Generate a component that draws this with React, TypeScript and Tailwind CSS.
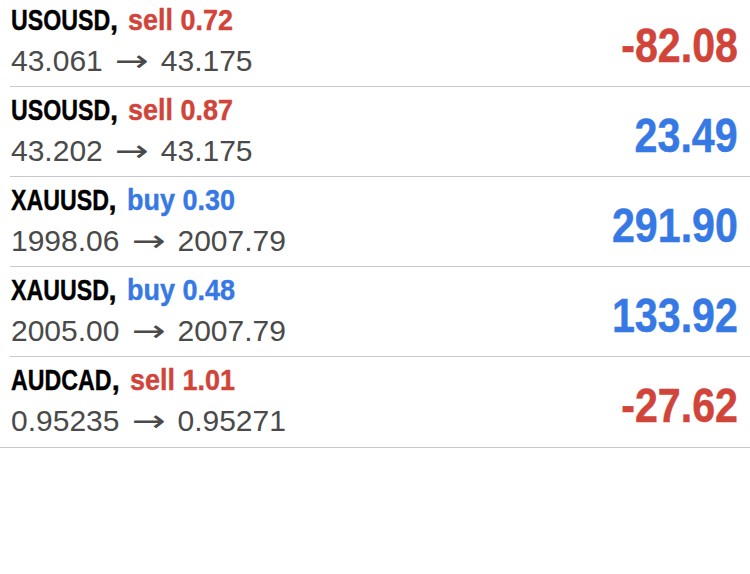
import React from "react";

type Pos = { sym: string; side: "buy" | "sell"; vol: string; from: string; to: string; pnl: string };

const data: Pos[] = [
  { sym: "USOUSD", side: "sell", vol: "0.72", from: "43.061", to: "43.175", pnl: "-82.08" },
  { sym: "USOUSD", side: "sell", vol: "0.87", from: "43.202", to: "43.175", pnl: "23.49" },
  { sym: "XAUUSD", side: "buy", vol: "0.30", from: "1998.06", to: "2007.79", pnl: "291.90" },
  { sym: "XAUUSD", side: "buy", vol: "0.48", from: "2005.00", to: "2007.79", pnl: "133.92" },
  { sym: "AUDCAD", side: "sell", vol: "1.01", from: "0.95235", to: "0.95271", pnl: "-27.62" },
];

const sans = { fontFamily: '"Liberation Sans", Arial, sans-serif' };
const arrowFont = { fontFamily: '"DejaVu Sans", sans-serif' };

export default function App() {
  return (
    <div className="w-[750px] h-[574px] bg-white overflow-hidden" style={sans}>
      <div className="border-b border-[#c8c7cc] -mt-[3px]">
        {data.map((p, i) => {
          const neg = p.pnl.startsWith("-");
          return (
            <div
              key={i}
              className={
                "ml-[10px] h-[90px] flex items-start justify-between pr-[12px] " +
                (i < data.length - 1 ? "border-b border-[#c8c7cc]" : "")
              }
            >
              <div className="flex flex-col pt-[7px] pl-[1px]">
                <div className="text-[29px] leading-[32px] font-bold whitespace-nowrap [-webkit-text-stroke:0.4px_currentColor]">
                  <span className="inline-block origin-left scale-x-[0.8] mr-[-25px] text-black">{p.sym}</span>
                  <span className="text-black">,</span>{" "}
                  <span
                    className={
                      "inline-block origin-left scale-x-[0.93] ml-[2px] " +
                      (p.side === "sell" ? "text-[#d0443a]" : "text-[#3679e4]")
                    }
                  >
                    {p.side} {p.vol}
                  </span>
                </div>
                <div className="text-[30px] leading-[34px] text-[#4a4a4a] mt-[8px] whitespace-nowrap flex items-center">
                  <span>{p.from}</span>
                  <span className="w-[58px] flex justify-center">
                    <span className="inline-block scale-x-[1.35] text-[30px] leading-[34px]" style={arrowFont}>
                      →
                    </span>
                  </span>
                  <span>{p.to}</span>
                </div>
              </div>
              <div
                className={
                  "pt-[24px] text-[49px] leading-none font-bold whitespace-nowrap [-webkit-text-stroke:0.5px_currentColor] " +
                  (neg ? "text-[#d0443a]" : "text-[#3679e4]")
                }
              >
                <span className="inline-block origin-right scale-x-[0.84]">{p.pnl}</span>
              </div>
            </div>
          );
        })}
      </div>
    </div>
  );
}
